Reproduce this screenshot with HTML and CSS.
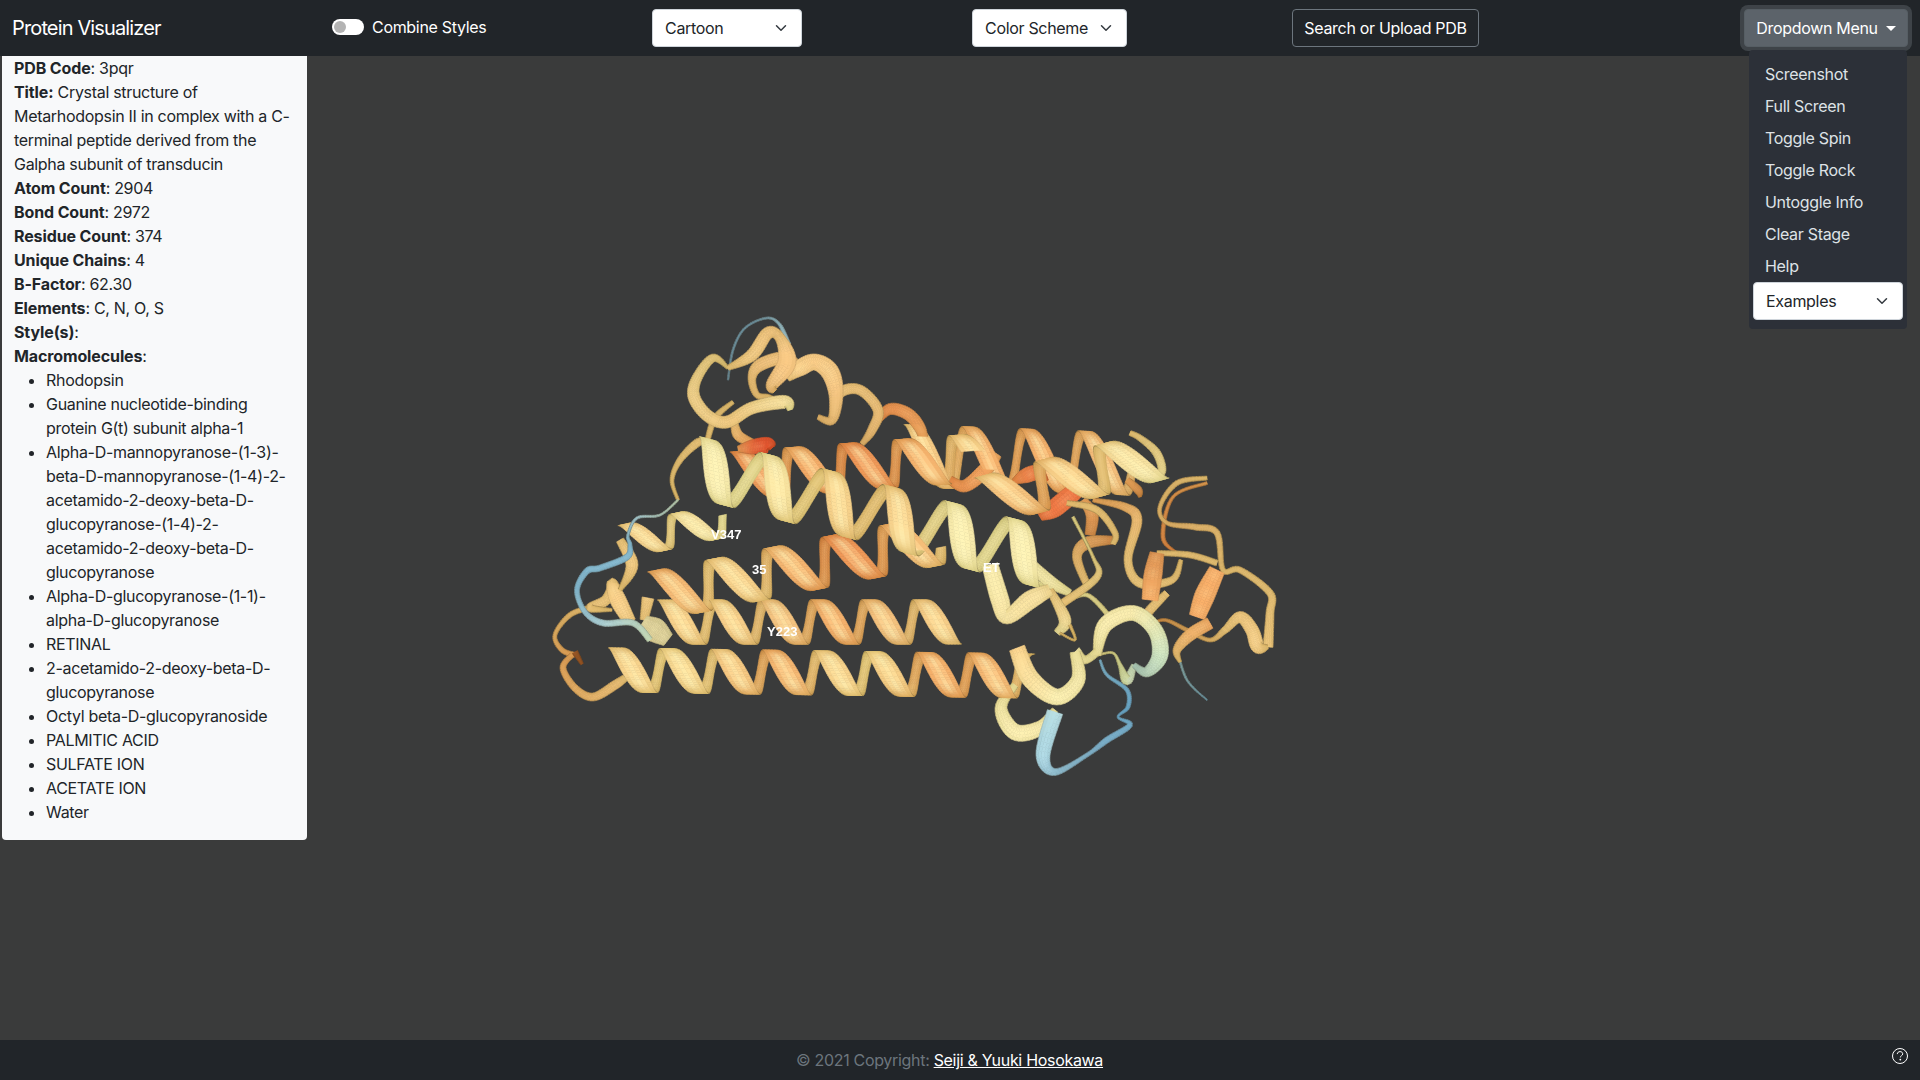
FILE: index.html
```html
<!DOCTYPE html>
<html lang="en">
<head>
<meta charset="utf-8">
<title>Protein Visualizer</title>
<link rel="stylesheet" href="styles.css">
</head>
<body>
<header class="navbar">
  <a class="brand">Protein Visualizer</a>
  <label class="switch">
    <span class="switch-track"><span class="switch-knob"></span></span>
    <span>Combine Styles</span>
  </label>
  <div class="select select-style">Cartoon
    <svg class="chev" viewBox="0 0 16 16"><path d="M2 5l6 6 6-6"/></svg>
  </div>
  <div class="select select-color">Color Scheme
    <svg class="chev" viewBox="0 0 16 16"><path d="M2 5l6 6 6-6"/></svg>
  </div>
  <button class="btn-outline">Search or Upload PDB</button>
  <div class="dropdown">
    <button class="btn-toggle">Dropdown Menu<span class="caret"></span></button>
    <div class="menu">
      <a class="menu-item">Screenshot</a>
      <a class="menu-item">Full Screen</a>
      <a class="menu-item">Toggle Spin</a>
      <a class="menu-item">Toggle Rock</a>
      <a class="menu-item">Untoggle Info</a>
      <a class="menu-item">Clear Stage</a>
      <a class="menu-item">Help</a>
      <div class="select select-examples">Examples
        <svg class="chev" viewBox="0 0 16 16"><path d="M2 5l6 6 6-6"/></svg>
      </div>
    </div>
  </div>
</header>
<main class="stage">
  <div class="viewer">
    <canvas id="protein" class="protein" width="1920" height="984"></canvas>
    <span class="label label-v347">V347</span>
    <span class="label label-35">35</span>
    <span class="label label-y223">Y223</span>
    <span class="label label-et">ET</span>
  </div>
  <aside class="info">
    <div><b>PDB Code</b>: 3pqr</div>
    <div><b>Title:</b> Crystal structure of Metarhodopsin II in complex with a C-terminal peptide derived from the Galpha subunit of transducin</div>
    <div><b>Atom Count</b>: 2904</div>
    <div><b>Bond Count</b>: 2972</div>
    <div><b>Residue Count</b>: 374</div>
    <div><b>Unique Chains</b>: 4</div>
    <div><b>B-Factor</b>: 62.30</div>
    <div><b>Elements</b>: C, N, O, S</div>
    <div><b>Style(s)</b>:</div>
    <div><b>Macromolecules</b>:</div>
    <ul class="molecules">
      <li>Rhodopsin</li>
      <li>Guanine nucleotide-binding protein G(t) subunit alpha-1</li>
      <li>Alpha-D-mannopyranose-(1-3)-beta-D-mannopyranose-(1-4)-2-acetamido-2-deoxy-beta-D-glucopyranose-(1-4)-2-acetamido-2-deoxy-beta-D-glucopyranose</li>
      <li>Alpha-D-glucopyranose-(1-1)-alpha-D-glucopyranose</li>
      <li>RETINAL</li>
      <li>2-acetamido-2-deoxy-beta-D-glucopyranose</li>
      <li>Octyl beta-D-glucopyranoside</li>
      <li>PALMITIC ACID</li>
      <li>SULFATE ION</li>
      <li>ACETATE ION</li>
      <li>Water</li>
    </ul>
  </aside>
</main>
<footer class="footer">
  <span class="copy">© 2021 Copyright: <a class="copy-link">Seiji &amp; Yuuki Hosokawa</a></span>
  <svg class="help" viewBox="0 0 16 16"><circle cx="8" cy="8" r="7.5"/><path d="M5.3 6.1c0-1.6 1.2-2.5 2.8-2.5 1.5 0 2.6.9 2.6 2.2 0 1-.5 1.5-1.3 2-.8.5-1 .8-1 1.6"/><circle class="help-dot" cx="8.3" cy="11.6" r=".9"/></svg>
</footer>
<script src="app.js"></script>
</body>
</html>
```
FILE: styles.css
```css
* { box-sizing: border-box; }
html, body { margin: 0; height: 100%; }
body {
  display: flex;
  flex-direction: column;
  height: 100vh;
  overflow: hidden;
  font-family: "Inter", "Liberation Sans", sans-serif;
  font-size: 16px;
  line-height: 24px;
  color: #212529;
  background: #3a3b3b;
  letter-spacing: -0.31px;
}
.navbar {
  flex: 0 0 56px;
  display: flex;
  align-items: center;
  padding: 0 12px;
  background: #212529;
  color: #fff;
  position: relative;
  z-index: 3;
}
.brand { font-size: 20px; width: 320px; flex: none; letter-spacing: -0.86px; }
.switch { display: flex; align-items: center; gap: 8px; width: 320px; flex: none; margin-top: -2px; }
.switch-track {
  width: 32px; height: 16px; border-radius: 8px; background: #fff;
  display: flex; align-items: center; padding-left: 2px;
}
.switch-knob { width: 12px; height: 12px; border-radius: 50%; background: #b3b3b3; }
.select {
  height: 38px; background: #fff; color: #212529;
  border: 1px solid #ced4da; border-radius: 4px;
  display: flex; align-items: center; justify-content: space-between;
  padding: 0 12px 0 12px; flex: none;
}
.chev { width: 16px; height: 12px; fill: none; stroke: #343a40; stroke-width: 2; stroke-linecap: round; stroke-linejoin: round; }
.select-style { width: 150px; }
.select-color { width: 155px; margin-left: 170px; }
.btn-outline {
  font: inherit; letter-spacing: inherit; color: #fff; background: transparent;
  border: 1px solid #6c757d; border-radius: 4px; height: 38px; width: 187px; padding: 0;
  margin-left: 165px; flex: none;
}
.dropdown { position: relative; margin-left: auto; flex: none; }
.btn-toggle {
  font: inherit; letter-spacing: inherit; color: #fff; background: #5c636a;
  border: 1px solid #565e64; border-radius: 4px; height: 38px; width: 164px; padding: 0;
  box-shadow: 0 0 0 4px rgba(130, 138, 145, .3);
  display: flex; align-items: center; justify-content: center; gap: 8px;
}
.caret { width: 0; height: 0; border-top: 5px solid #fff; border-left: 5px solid transparent; border-right: 5px solid transparent; }
.menu {
  position: absolute; top: 41px; left: 5px; width: 158px; height: 279px;
  padding: 8px 4px 0 4px; background: #2c3038; border-radius: 4px;
  display: flex; flex-direction: column;
}
.menu-item { display: block; height: 32px; line-height: 32px; padding-left: 12px; color: #dee2e6; }
.select-examples { width: 150px; }
.stage { flex: 1 1 auto; position: relative; display: flex; align-items: flex-start; min-height: 0; }
.viewer { position: absolute; inset: 0; }
.protein { position: absolute; left: 0; top: 0; width: 1920px; height: 984px; }
.label { position: absolute; font-family: "Liberation Sans", sans-serif; font-weight: 700; font-size: 13px; line-height: 14px; color: #fff; letter-spacing: 0; }
.label-v347 { left: 711px; top: 472px; }
.label-35 { left: 752px; top: 507px; }
.label-y223 { left: 767px; top: 569px; }
.label-et { left: 983px; top: 505px; }
.info {
  position: relative; z-index: 2;
  width: 305px; margin-left: 2px; padding: 0 12px;
  background: #f8f9fa; border-radius: 0 0 4px 4px;
  overflow-wrap: break-word;
}
.info b { font-weight: 700; letter-spacing: -0.12px; }
.molecules { margin: 0 0 16px; padding-left: 32px; }
.footer {
  flex: 0 0 40px; background: #212529; position: relative;
  display: flex; align-items: center; justify-content: center; padding-right: 21px;
}
.copy { color: #6c757d; }
.copy-link { color: #fff; text-decoration: underline; }
.help { position: absolute; right: 12px; top: 8px; width: 16px; height: 16px; fill: none; stroke: #fff; stroke-width: 1; }
.help-dot { fill: #fff; stroke: none; }
```
FILE: app.js
```js
(function () {
  var T = '#f9d08a', P = '#f9ecae', O = '#f6ad68', D = '#f09050', R = '#e2552f',
      B = '#8cc4dc', LB = '#b5dbe0', S = '#cfe4c0', BR = '#d99050', Q = '#f5c280';
  var segs = [];
  function hex(s) { return [parseInt(s.slice(1, 3), 16), parseInt(s.slice(3, 5), 16), parseInt(s.slice(5, 7), 16)]; }
  function ramp(list, t) {
    if (list.length === 1) return hex(list[0]);
    var f = Math.max(0, Math.min(.9999, t)) * (list.length - 1), i = Math.floor(f), u = f - i;
    var a = hex(list[i]), b = hex(list[i + 1]);
    return [a[0] + (b[0] - a[0]) * u, a[1] + (b[1] - a[1]) * u, a[2] + (b[2] - a[2]) * u];
  }
  function tone(c, l, sp) {
    var warm = c[0] > c[2] + 30;
    var r = Math.min(255, c[0] * l), g = Math.min(255, c[1] * l), b = Math.min(255, c[2] * l * (warm && l < 1 ? l : 1));
    if (warm) { r += (255 - r) * sp; g += (248 - g) * sp; b += (190 - b) * sp; }
    else { r += (235 - r) * sp; g += (250 - g) * sp; b += (255 - b) * sp; }
    return 'rgb(' + Math.round(r) + ',' + Math.round(g) + ',' + Math.round(b) + ')';
  }
  function lerp(p, q, t) { return [p[0] + (q[0] - p[0]) * t, p[1] + (q[1] - p[1]) * t]; }
  function addSeg(z, a1, a2, b1, b2, col, l, spF, edge) {
    var strips = [], n = 5;
    for (var j = 0; j < n; j++) {
      var u0 = j / n, u1 = (j + 1) / n, u = (u0 + u1) - 1;
      var lit = l * (1 - .06 * u * u);
      var sp = spF * Math.exp(-(u * u) / .3);
      strips.push({
        p: [lerp(a1, a2, u0), lerp(a1, a2, u1), lerp(b1, b2, u1), lerp(b1, b2, u0)],
        c: tone(col, lit, sp)
      });
    }
    segs.push({ z: z, strips: strips, e: [[a1, b1], [a2, b2]], ea: edge });
  }

  function helix(o) {
    var dx = o.b[0] - o.a[0], dy = o.b[1] - o.a[1], L = Math.hypot(dx, dy);
    var ax = dx / L, ay = dy / L, px = ay, py = -ax;
    var pitch = L / o.turns, k = (o.k === undefined ? .08 : o.k) * pitch;
    var back = o.back === undefined ? .38 : o.back;
    var th0 = o.th0 || 0, steps = Math.round(o.turns * 56), prev = null;
    for (var i = 0; i <= steps; i++) {
      var f = i / steps, th = th0 + 2 * Math.PI * o.turns * f, s = Math.sin(th), co = Math.cos(th);
      var along = L * f - k * co, h = o.r * co;
      var cx = o.a[0] + ax * along + px * h, cy = o.a[1] + ay * along + py * h;
      var wf = s > 0 ? .66 + .34 * s : .66 + (.66 - back) * s;
      var half = o.w / 2 * wf;
      var e1 = [cx - ax * half, cy - ay * half], e2 = [cx + ax * half, cy + ay * half];
      if (prev) {
        var l = s > 0 ? .88 + .15 * s : .86 + .06 * (-s);
        var spF = s > 0 ? .55 * Math.exp(-Math.pow((s - .85) / .3, 2)) : .14 * Math.exp(-Math.pow((s + .8) / .3, 2));
        addSeg(o.z + o.r * s, prev[0], prev[1], e1, e2, ramp(o.c, f), l, spF, .1 + .6 * Math.pow(1 - Math.abs(s), 2));
      }
      prev = [e1, e2];
    }
  }

  function loop(pts, c, z, ref) {
    var n = 10, all = [];
    for (var i = 0; i < pts.length - 1; i++) {
      var p0 = pts[Math.max(0, i - 1)], p1 = pts[i], p2 = pts[i + 1], p3 = pts[Math.min(pts.length - 1, i + 2)];
      for (var j = 0; j < n; j++) {
        var t = j / n, t2 = t * t, t3 = t2 * t, q = [0, 0, 0];
        for (var d = 0; d < 3; d++) {
          q[d] = .5 * (2 * p1[d] + (p2[d] - p0[d]) * t + (2 * p0[d] - 5 * p1[d] + 4 * p2[d] - p3[d]) * t2 + (3 * p1[d] - p0[d] - 3 * p2[d] + p3[d]) * t3);
        }
        all.push(q);
      }
    }
    all.push(pts[pts.length - 1].slice(0, 3));
    var prev = null;
    ref = ref || 16;
    for (var m = 0; m < all.length; m++) {
      var a = all[Math.max(0, m - 1)], b = all[Math.min(all.length - 1, m + 1)];
      var tx = b[0] - a[0], ty = b[1] - a[1], tl = Math.hypot(tx, ty) || 1;
      var nx = -ty / tl, ny = tx / tl, hw = Math.max(.5, all[m][2]) / 2;
      var e1 = [all[m][0] + nx * hw, all[m][1] + ny * hw], e2 = [all[m][0] - nx * hw, all[m][1] - ny * hw];
      if (prev) {
        var r = Math.min(1, all[m][2] / ref), f = m / (all.length - 1);
        var wave = Math.sin(f * Math.PI * 3);
        addSeg(z + f, prev[0], prev[1], e1, e2, ramp(c, f), .84 + .18 * r, r > .6 ? .25 * (r - .4) * wave * wave : 0, .42 - .24 * r);
      }
      prev = [e1, e2];
    }
  }

  /* rear rows */
  helix({ a: [915, 456], b: [1130, 464], turns: 3.7, r: 31, w: 20, z: -30, c: [T, O, O, Q], k: .1 });
  helix({ a: [745, 475], b: [975, 458], turns: 4.2, r: 24, w: 24, z: 0, c: [D, O, D, O, T], k: .1 });
  helix({ a: [669, 622], b: [950, 622], turns: 5.5, r: 22, w: 23, z: 5, c: [T, T, Q, O, Q, T], k: .08 });
  helix({ a: [665, 594], b: [938, 540], turns: 4.7, r: 25, w: 25, z: 30, c: [O, T, T, O, D, O, T], k: .08 });
  helix({ a: [620, 670], b: [1031, 676], turns: 8, r: 22, w: 24, z: 55, c: [T, '#f9da92', T, O, T, '#f8d990', O, O, T], k: .08 });
  helix({ a: [997, 498], b: [1147, 458], turns: 2.5, r: 25, w: 27, z: 38, c: [T, O, T, T, P], k: .12 });
  helix({ a: [701, 468], b: [1045, 558], turns: 5.6, r: 30, w: 26, z: 72, c: [P, P, '#f9dc95', T, T, P, P, P], k: .02, back: .5 });
  helix({ a: [632, 540], b: [725, 520], turns: 1.8, r: 17, w: 20, z: 10, c: [T, P], k: .08 });

  /* right end curl of the upper helix */
  loop([[1155, 478, 8], [1162, 470, 8], [1156, 452, 8], [1140, 438, 6], [1130, 433, 5]], [P, T], 34);

  /* red accents */
  loop([[1013, 482, 5], [1025, 476, 14], [1037, 473, 14], [1046, 482, 6]], [D, '#ee7342'], 0, 16);
  loop([[1040, 517, 8], [1055, 508, 18], [1077, 490, 16], [1085, 488, 6]], ['#ee7a45', '#ee7342'], 2, 16);
  loop([[950, 480, 8], [965, 486, 12], [985, 470, 14], [997, 454, 10]], [D, O], -2, 16);
  loop([[1083, 500, 8], [1092, 515, 12], [1090, 535, 10]], [O, BR], 32, 16);
  loop([[1127, 480, 6], [1138, 490, 8], [1140, 497, 3]], [O, BR], 30, 16);

  /* top blob */
  loop([[734, 420, 6], [738, 435, 10], [752, 443, 8]], [T, O], 20);
  loop([[738, 449, 6], [752, 447, 14], [768, 445, 15], [772, 448, 6]], [O, R, R], 26);
  loop([[707, 442, 5], [715, 418, 6], [733, 402, 4]], [T], 25);
  loop([[790, 408, 2], [770, 397, 4], [757, 395, 6], [752, 378, 8], [760, 365, 12], [785, 358, 12], [800, 368, 8]], [T, Q], 15);
  loop([[728, 368, 3], [713, 358, 8], [697, 378, 10], [694, 397, 12], [708, 416, 12], [727, 422, 12], [752, 408, 12], [785, 402, 13], [790, 410, 5]], ['#f2d28c', '#f6d692', T, P], 30);
  loop([[728, 380, 1.5], [733, 350, 2], [745, 328, 2], [767, 318, 2], [780, 325, 3], [788, 345, 6]], ['#7fa9b8', '#7fa9b8', LB], 28);
  loop([[728, 368, 5], [752, 355, 12], [768, 333, 12], [780, 338, 10], [787, 362, 18], [772, 385, 12], [775, 391, 5]], [T, Q], 35);
  loop([[787, 378, 8], [800, 368, 16], [815, 362, 16], [830, 372, 18], [836, 395, 14], [832, 420, 9], [818, 417, 5]], [T, Q], 25);
  loop([[832, 416, 5], [840, 393, 10], [860, 390, 10], [878, 410, 10], [872, 430, 9], [862, 444, 5]], [T, Q], 0);
  loop([[878, 420, 7], [890, 409, 11], [908, 414, 12], [920, 428, 11], [925, 445, 7]], [D, O], -5);

  /* left end */
  loop([[592, 607, 5], [570, 615, 5], [555, 635, 4], [562, 650, 5], [575, 655, 5]], [T, O], 4);
  loop([[575, 652, 6], [582, 664, 3]], ['#a8602f'], 6);
  loop([[572, 655, 5], [563, 668, 6], [575, 688, 7], [593, 697, 8], [615, 685, 9], [625, 678, 7]], [O, T], 5);
  loop([[620, 590, 5], [612, 583, 10], [618, 600, 16], [630, 622, 12]], [T], 12);
  loop([[620, 540, 8], [632, 565, 12], [620, 590, 4]], [T], 20);
  loop([[612, 583, 6], [606, 600, 10], [590, 608, 8], [612, 610, 3]], [T], 10);
  loop([[648, 598, 12], [644, 620, 8]], [T], 46);
  loop([[643, 622, 14], [655, 630, 24], [668, 640, 14]], ['#dccf98'], 48);
  loop([[678, 500, 3], [672, 480, 4], [680, 460, 6], [697, 443, 8], [707, 441, 5]], [T], 50);
  loop([[678, 500, 2], [660, 515, 2], [637, 518, 2.5], [628, 535, 2.5], [630, 545, 4], [627, 557, 6], [600, 568, 6], [587, 571, 6], [577, 590, 5], [585, 612, 5], [603, 623, 6], [633, 623, 6], [650, 640, 6]], [S, LB, B, B, B, LB, S], 70, 10);

  /* right side */
  loop([[1067, 503, 5], [1097, 510, 7], [1115, 533, 6], [1113, 544, 5]], [T], 40);
  loop([[1113, 540, 8], [1087, 543, 12], [1077, 557, 9], [1087, 585, 7]], [BR, T], 36);
  loop([[1093, 500, 4], [1125, 507, 8], [1137, 520, 10], [1128, 560, 8], [1140, 583, 9], [1172, 580, 7], [1181, 560, 4]], [O, T, T], 20);
  loop([[1207, 478, 4], [1177, 483, 5], [1160, 507, 4], [1167, 523, 4], [1195, 527, 6], [1217, 533, 6], [1223, 570, 5], [1240, 570, 6], [1270, 593, 7], [1270, 613, 8], [1268, 647, 10]], [T, Q, T, T], 10);
  loop([[1207, 483, 3], [1173, 497, 3], [1163, 537, 4], [1177, 553, 2]], [O, D], 8);
  loop([[1157, 553, 5], [1190, 555, 6], [1217, 563, 6]], [T], 24);
  loop([[1157, 553, 14], [1153, 575, 18], [1150, 600, 16]], [BR, O], 28);
  loop([[1167, 593, 7], [1150, 610, 9], [1143, 622, 5]], [T], 5);
  loop([[1217, 570, 16], [1205, 595, 20], [1197, 617, 16]], [O, O], 30);
  loop([[1210, 623, 12], [1190, 635, 12], [1177, 650, 8], [1180, 662, 3]], [O, T], 32);
  loop([[1177, 650, 2], [1187, 680, 2], [1207, 700, 1.2]], ['#9bbdb8', '#7eb0c0'], 30);
  loop([[1150, 625, 2], [1165, 620, 3], [1187, 630, 4], [1210, 640, 4], [1225, 630, 7], [1240, 617, 11], [1252, 630, 13], [1258, 647, 13], [1268, 647, 4]], [BR, T, T], 18);

  /* lower pale region */
  loop([[990, 565, 16], [1000, 600, 18], [1007, 617, 14], [1030, 600, 18], [1050, 590, 12]], [P, '#f6dc9a'], 76);
  loop([[1033, 567, 12], [1052, 583, 12], [1070, 593, 7]], [P], 60);
  loop([[1050, 590, 7], [1065, 620, 12], [1057, 633, 7]], [T, P], 74);
  loop([[1073, 517, 3], [1093, 557, 3], [1097, 577, 7], [1063, 603, 8]], [P, T], 70);
  loop([[1063, 603, 4], [1087, 595, 4], [1110, 617, 5]], [P], 20);
  loop([[1070, 625, 3], [1075, 640, 2], [1060, 633, 2]], [T], 75);
  loop([[1017, 648, 16], [1030, 678, 18], [1057, 697, 16], [1078, 680, 14], [1075, 652, 10]], [T, P, P], 72);
  loop([[1075, 652, 12], [1085, 660, 8], [1097, 652, 8]], [P], 66);
  loop([[1055, 710, 7], [1040, 728, 14], [1015, 732, 16], [1001, 708, 12], [1015, 685, 7]], [P, P], 45);
  loop([[1100, 660, 2], [1107, 675, 3], [1127, 690, 4], [1128, 707, 4], [1118, 717, 2], [1130, 725, 5], [1107, 740, 6], [1087, 755, 4], [1055, 772, 7], [1043, 755, 14], [1055, 712, 16]], [B, '#74b8dc', '#8cc4e0', LB], 50, 14);
  loop([[1134, 665, 5], [1127, 680, 10], [1120, 665, 4], [1113, 653, 2], [1098, 655, 2]], [S, P], 62);
  loop([[1097, 655, 8], [1105, 625, 15], [1133, 613, 15], [1155, 630, 15], [1160, 655, 16], [1147, 672, 10], [1134, 665, 5]], [P, P, S, '#b8d8c4'], 64);

  segs.sort(function (a, b) { return a.z - b.z; });
  var ctx = document.getElementById('protein').getContext('2d');
  ctx.translate(0, -56);
  ctx.lineJoin = 'round';
  function poly(p) {
    ctx.beginPath(); ctx.moveTo(p[0][0], p[0][1]);
    for (var i = 1; i < p.length; i++) ctx.lineTo(p[i][0], p[i][1]);
    ctx.closePath();
  }
  segs.forEach(function (s) {
    s.strips.forEach(function (st) {
      poly(st.p); ctx.fillStyle = st.c; ctx.strokeStyle = st.c; ctx.lineWidth = .6; ctx.fill(); ctx.stroke();
    });
    ctx.strokeStyle = 'rgba(60,45,30,' + s.ea + ')'; ctx.lineWidth = .8;
    s.e.forEach(function (l) { ctx.beginPath(); ctx.moveTo(l[0][0], l[0][1]); ctx.lineTo(l[1][0], l[1][1]); ctx.stroke(); });
  });
})();
```
